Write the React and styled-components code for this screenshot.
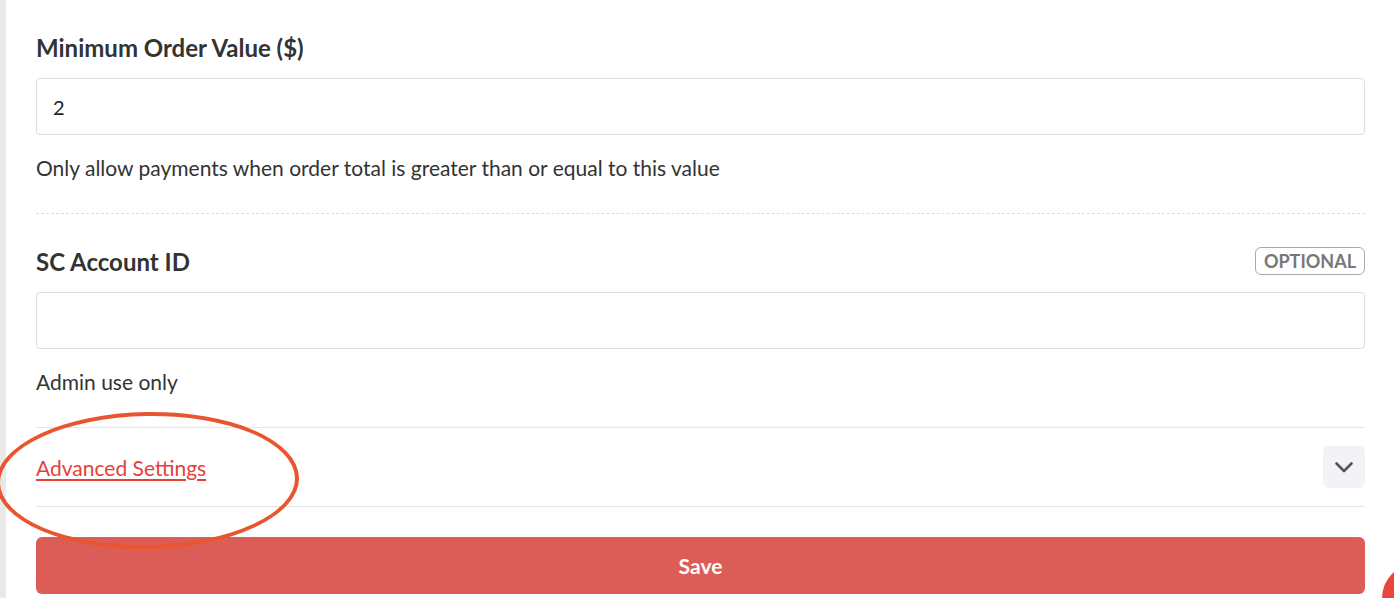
import React, { useState } from 'react';
import styled, { createGlobalStyle } from 'styled-components';

const GlobalStyle = createGlobalStyle`
  body {
    margin: 0;
    background: #ffffff;
    font-family: Lato, "Open Sans", sans-serif;
    color: #333333;
    overflow: hidden;
  }
`;

const PageStyled = styled.div`
  display: flex;
  min-height: 598px;
  position: relative;
  overflow: hidden;
`;

const SideStrip = styled.div`
  width: 6px;
  background: #e9e9e9;
  flex-shrink: 0;
`;

const ContentStyled = styled.div`
  flex: 1;
  padding: 30px 29px 0 30px;
  display: flex;
  flex-direction: column;
`;

const FieldStyled = styled.div`
  display: flex;
  flex-direction: column;
  padding-top: ${(p) => p.$top || 0}px;
  padding-bottom: ${(p) => p.$bottom || 0}px;
`;

const LabelRow = styled.div`
  display: flex;
  align-items: center;
  justify-content: space-between;
  height: 34px;
  margin-bottom: 14px;
`;

const LabelStyled = styled.label`
  font-size: 24px;
  font-weight: 700;
  color: #333333;
`;

const Badge = styled.span`
  font-size: 18px;
  font-weight: 700;
  color: #777777;
  border: 1px solid #aaaaaa;
  border-radius: 6px;
  padding: 3px 8px;
  line-height: 20px;
`;

const InputStyled = styled.input`
  box-sizing: border-box;
  height: 57px;
  width: 100%;
  border: 1px solid #dddddd;
  border-radius: 4px;
  padding: 0 16px;
  font-family: Lato, sans-serif;
  font-size: 20px;
  color: #222222;
  outline: none;
`;

const HelpText = styled.p`
  margin: 20px 0 0;
  font-size: 21px;
  line-height: 26px;
  color: #333333;
`;

const Divider = styled.hr`
  margin: 0;
  border: none;
  border-top: 1px ${(p) => (p.$dashed ? 'dashed #dddddd' : 'solid #e6e6e6')};
`;

const AdvancedRow = styled.div`
  display: flex;
  align-items: center;
  justify-content: space-between;
  height: 78px;
`;

const LinkStyled = styled.a`
  color: #e5413b;
  font-size: 21px;
  text-decoration: underline;
  text-underline-offset: 3px;
  cursor: pointer;
`;

const ChevronButton = styled.button`
  width: 42px;
  height: 42px;
  border: none;
  border-radius: 6px;
  background: #f2f3f6;
  display: flex;
  align-items: center;
  justify-content: center;
  cursor: pointer;
  padding: 0;
`;

const SaveButton = styled.button`
  margin-top: 30px;
  height: 57px;
  width: 100%;
  border: none;
  border-radius: 6px;
  background: #dc5d57;
  color: #ffffff;
  font-family: Lato, sans-serif;
  font-size: 21px;
  font-weight: 700;
  cursor: pointer;
`;

const Annotation = styled.div`
  position: absolute;
  left: -4px;
  top: 412px;
  width: 295px;
  height: 129px;
  border: 4px solid #e8552f;
  border-radius: 50%;
  pointer-events: none;
  transform: rotate(-1deg);
`;

const FloatingDot = styled.div`
  position: absolute;
  left: 1382px;
  top: 564px;
  width: 68px;
  height: 68px;
  border-radius: 50%;
  background: #e8453c;
`;

const App = () => {
  const [minValue, setMinValue] = useState('2');
  const [accountId, setAccountId] = useState('');
  const [open, setOpen] = useState(false);

  return (
    <PageStyled>
      <GlobalStyle />
      <SideStrip />
      <ContentStyled>
        <FieldStyled $bottom={32}>
          <LabelRow>
            <LabelStyled>Minimum Order Value ($)</LabelStyled>
          </LabelRow>
          <InputStyled value={minValue} onChange={(e) => setMinValue(e.target.value)} />
          <HelpText>Only allow payments when order total is greater than or equal to this value</HelpText>
        </FieldStyled>
        <Divider $dashed />
        <FieldStyled $top={30} $bottom={32}>
          <LabelRow>
            <LabelStyled>SC Account ID</LabelStyled>
            <Badge>OPTIONAL</Badge>
          </LabelRow>
          <InputStyled value={accountId} onChange={(e) => setAccountId(e.target.value)} />
          <HelpText>Admin use only</HelpText>
        </FieldStyled>
        <Divider />
        <AdvancedRow>
          <LinkStyled onClick={() => setOpen(!open)}>Advanced Settings</LinkStyled>
          <ChevronButton onClick={() => setOpen(!open)}>
            <svg width="24" height="24" viewBox="0 0 24 24" fill="none" stroke="#555" strokeWidth="2.6" strokeLinecap="round" strokeLinejoin="round">
              <path d="M4.5 8.5l7.5 7.5 7.5-7.5" />
            </svg>
          </ChevronButton>
        </AdvancedRow>
        <Divider />
        <SaveButton>Save</SaveButton>
      </ContentStyled>
      <Annotation />
      <FloatingDot />
    </PageStyled>
  );
};

export default App;
